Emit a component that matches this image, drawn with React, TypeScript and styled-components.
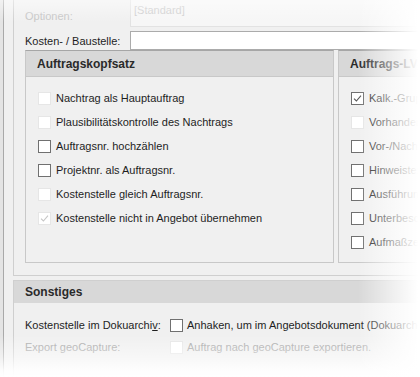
import styled, { createGlobalStyle } from "styled-components"

const GlobalStyle = createGlobalStyle`
  html, body {
    margin: 0;
    padding: 0;
    background: #ffffff;
    overflow: hidden;
  }
  body {
    font-family: "Liberation Sans", Arial, sans-serif;
    font-size: 11px;
    color: #1e1e1e;
  }
`

const Page = styled.div`
  position: relative;
  width: 420px;
  height: 377px;
  overflow: hidden;
  background: #f0f0f0;
  display: flex;
`

const LeftEdge = styled.div`
  width: 3px;
  flex: none;
  background: #e4e4e4;
  border-right: 1px solid #a9a9a9;
`

const Main = styled.div`
  flex: 1;
  padding-left: 9px;
  display: flex;
  flex-direction: column;
  min-width: 0;
`

const OptionsPanel = styled.div`
  border-left: 1px solid #cfcfcf;
  border-bottom: 1px solid #cfcfcf;
  padding: 0 0 12px 11px;
  display: flex;
  flex-direction: column;
`

const FieldRow = styled.div<{ $height: number; $top?: number }>`
  display: grid;
  grid-template-columns: 105px 1fr;
  height: ${(p) => p.$height}px;
  margin-top: ${(p) => p.$top ?? 0}px;
  align-items: center;
`

const FieldLabel = styled.div<{ $disabled?: boolean; $shift?: number }>`
  color: ${(p) => (p.$disabled ? "#c4c4c4" : "#1e1e1e")};
  padding-top: ${(p) => p.$shift ?? 0}px;
  white-space: nowrap;
`

const Combo = styled.div`
  height: 100%;
  box-sizing: border-box;
  border: 1px solid #e2e2e2;
  border-top: none;
  background: #f6f6f6;
  color: #cdcdcd;
  padding: 4px 0 0 3px;
`

const TextInput = styled.div`
  height: 100%;
  box-sizing: border-box;
  border: 1px solid #ababab;
  border-right: none;
  background: #ffffff;
`

const GroupRow = styled.div`
  display: flex;
  gap: 4px;
  overflow: hidden;
`

const GroupBox = styled.div<{ $width: number }>`
  flex: none;
  width: ${(p) => p.$width}px;
  height: 213px;
  box-sizing: border-box;
  border: 1px solid #c8c8c8;
  border-top-color: #a6a6a6;
`

const GroupHeader = styled.div`
  height: 25px;
  background: #d8d8d8;
  border-bottom: 1px solid #c8c8c8;
  padding-left: 11px;
  display: flex;
  align-items: center;
  font-weight: bold;
  font-size: 12px;
  color: #2a2a2a;
`

const GroupBody = styled.div`
  padding: 9px 0 0 12px;
  display: flex;
  flex-direction: column;
`

const CheckRow = styled.div`
  height: 24px;
  display: flex;
  align-items: center;
  gap: 5px;
  white-space: nowrap;
`

const Box = styled.span<{ $disabled?: boolean }>`
  width: 13px;
  height: 13px;
  flex: none;
  box-sizing: border-box;
  background: #ffffff;
  border: 1px solid ${(p) => (p.$disabled ? "#e6e6e6" : "#707070")};
  display: flex;
  align-items: center;
  justify-content: center;
`

const CheckText = styled.span<{ $disabled?: boolean }>`
  color: ${(p) => (p.$disabled ? "#a8a8a8" : "#1e1e1e")};
`

const Section = styled.div`
  margin-top: 4px;
  display: flex;
  flex-direction: column;
  border-left: 1px solid #cfcfcf;
  flex: 1;
`

const SectionHeader = styled.div`
  height: 22px;
  background: #d8d8d8;
  border-top: 1px solid #cfcfcf;
  padding-left: 11px;
  display: flex;
  align-items: center;
  font-weight: bold;
  font-size: 12px;
  color: #2a2a2a;
`

const SectionBody = styled.div`
  padding: 11px 0 0 11px;
  display: flex;
  flex-direction: column;
`

const SectionRow = styled.div`
  display: grid;
  grid-template-columns: 145px 1fr;
  height: 22px;
  align-items: center;
  white-space: nowrap;
`

const Inline = styled.div`
  display: flex;
  align-items: center;
  gap: 4px;
`

const Key = styled.span`
  text-decoration: underline;
`

const Fade = styled.div`
  position: absolute;
  inset: 0;
  pointer-events: none;
  background:
    linear-gradient(to right, rgba(255, 255, 255, 0) 358px, rgba(255, 255, 255, 0.55) 390px, #ffffff 418px),
    linear-gradient(to bottom, rgba(255, 255, 255, 0.5) 0px, rgba(255, 255, 255, 0) 22px, rgba(255, 255, 255, 0) 335px, rgba(255, 255, 255, 0.45) 356px, rgba(255, 255, 255, 0.9) 370px, #ffffff 377px);
`

function Check({ on, dim }: { on?: boolean; dim?: boolean }) {
  return (
    <Box $disabled={dim}>
      {on && (
        <svg width="9" height="9" viewBox="0 0 9 9">
          <path d="M1 4.6 L3.4 7 L8 1.6" fill="none" stroke={dim ? "#c6c6c6" : "#555"} strokeWidth="1.1" />
        </svg>
      )}
    </Box>
  )
}

type Item = { label: string; on?: boolean; dim?: boolean }

const headItems: Item[] = [
  { label: "Nachtrag als Hauptauftrag", dim: true },
  { label: "Plausibilitätskontrolle des Nachtrags", dim: true },
  { label: "Auftragsnr. hochzählen" },
  { label: "Projektnr. als Auftragsnr." },
  { label: "Kostenstelle gleich Auftragsnr.", dim: true },
  { label: "Kostenstelle nicht in Angebot übernehmen", on: true, dim: true },
]

const lvItems: Item[] = [
  { label: "Kalk.-Gruppen übernehmen", on: true },
  { label: "Vorhandene Positionen", dim: true },
  { label: "Vor-/Nachtexte" },
  { label: "Hinweistexte" },
  { label: "Ausführungsbeschreibung" },
  { label: "Unterbeschreibungen" },
  { label: "Aufmaßzeilen" },
]

function Group({ title, width, items }: { title: string; width: number; items: Item[] }) {
  return (
    <GroupBox $width={width}>
      <GroupHeader>{title}</GroupHeader>
      <GroupBody>
        {items.map((it) => (
          <CheckRow key={it.label}>
            <Check on={it.on} dim={it.dim} />
            <CheckText>{it.label}</CheckText>
          </CheckRow>
        ))}
      </GroupBody>
    </GroupBox>
  )
}

function App() {
  return (
    <>
      <GlobalStyle />
      <Page>
        <LeftEdge />
        <Main>
          <OptionsPanel>
            <FieldRow $height={27}>
              <FieldLabel $disabled $shift={5}>Optionen:</FieldLabel>
              <Combo>[Standard]</Combo>
            </FieldRow>
            <FieldRow $height={19} $top={4}>
              <FieldLabel>Kosten- / Baustelle:</FieldLabel>
              <TextInput />
            </FieldRow>
            <GroupRow>
              <Group title="Auftragskopfsatz" width={309} items={headItems} />
              <Group title="Auftrags-LV" width={200} items={lvItems} />
            </GroupRow>
          </OptionsPanel>
          <Section>
            <SectionHeader>Sonstiges</SectionHeader>
            <SectionBody>
              <SectionRow>
                <span>
                  Kostenstelle im Dokuarchi<Key>v</Key>:
                </span>
                <Inline>
                  <Check />
                  <span>Anhaken, um im Angebotsdokument (Dokuarchiv) die Kostenstelle anzuzeigen.</span>
                </Inline>
              </SectionRow>
              <SectionRow>
                <CheckText $disabled>Export geoCapture:</CheckText>
                <Inline>
                  <Check dim />
                  <CheckText $disabled>Auftrag nach geoCapture exportieren.</CheckText>
                </Inline>
              </SectionRow>
            </SectionBody>
          </Section>
        </Main>
        <Fade />
      </Page>
    </>
  )
}

export default App
